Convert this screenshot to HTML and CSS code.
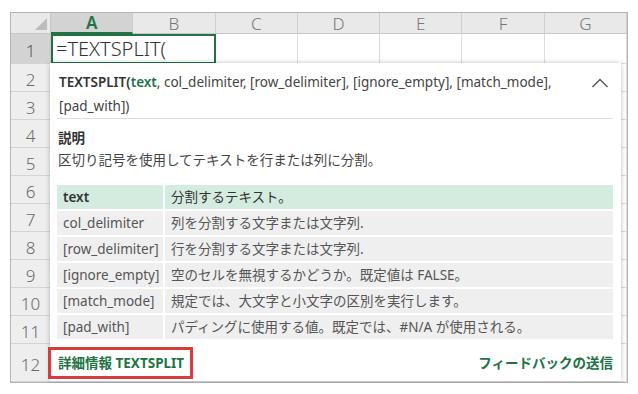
FILE: index.html
```html
<!DOCTYPE html>
<html lang="ja">
<head>
<meta charset="UTF-8" />
<meta name="viewport" content="width=device-width, initial-scale=1" />
<title>TEXTSPLIT</title>
<link rel="stylesheet" href="styles.css">
</head>
<body>
  <div class="sheet">
    <div class="grid" id="grid"></div>

    <div class="tip">
      <div class="sig">
        <div class="sig-text"><b>TEXTSPLIT(<span class="cur">text</span></b>, col_delimiter, [row_delimiter], [ignore_empty], [match_mode], [pad_with])</div>
        <svg class="chev" width="18" height="10" viewBox="0 0 18 10"><polyline points="1.5,9 9,1.5 16.5,9" fill="none" stroke="#555" stroke-width="1.4"/></svg>
      </div>

      <div class="desc-title">説明</div>
      <div class="desc">区切り記号を使用してテキストを行または列に分割。</div>

      <table class="args">
        <tr class="active"><td>text</td><td>分割するテキスト。</td></tr>
        <tr><td>col_delimiter</td><td>列を分割する文字または文字列.</td></tr>
        <tr><td>[row_delimiter]</td><td>行を分割する文字または文字列.</td></tr>
        <tr><td>[ignore_empty]</td><td>空のセルを無視するかどうか。既定値は FALSE。</td></tr>
        <tr><td>[match_mode]</td><td>規定では、大文字と小文字の区別を実行します。</td></tr>
        <tr><td>[pad_with]</td><td>パディングに使用する値。既定では、#N/A が使用される。</td></tr>
      </table>

      <div class="foot">
        <a class="more">詳細情報 TEXTSPLIT</a>
        <a class="feedback">フィードバックの送信</a>
      </div>
    </div>
  </div>

<script>
  const grid = document.getElementById('grid');
  const cols = ['A', 'B', 'C', 'D', 'E', 'F', 'G'];

  function cell(cls, text) {
    const d = document.createElement('div');
    d.className = cls;
    if (text) d.textContent = text;
    grid.appendChild(d);
    return d;
  }

  // kolomkoppen
  cell('corner');
  cols.forEach(c => cell(c === 'A' ? 'colhead sel' : 'colhead', c));

  // rijen 1 t/m 12
  for (let r = 1; r <= 12; r++) {
    cell(r === 1 ? 'rowhead sel' : 'rowhead', String(r));
    if (r === 1) {
      cell('cell edit', '=TEXTSPLIT(');
      cols.slice(2).forEach(() => cell('cell'));
    } else {
      cols.forEach(() => cell('cell'));
    }
  }
</script>
</body>
</html>
```

FILE: styles.css
```css
body {
  margin: 0;
  background: #fff;
  font-family: "Noto Sans", "Noto Sans CJK JP", sans-serif;
  color: #444;
}
.sheet {
  position: relative;
  margin: 12px 0 0 10px;
  width: 618px;
  height: 371px;
}
.grid {
  display: grid;
  grid-template-columns: 40px repeat(7, 1fr);
  grid-template-rows: 21px 30px repeat(10, 28px) 1fr;
  width: 100%;
  height: 100%;
  box-sizing: border-box;
  border: 1px solid #b4b4b4;
  overflow: hidden;
}
.corner {
  position: relative;
  background: #e9e9e9;
  border-right: 1px solid #c6c6c6;
  border-bottom: 1px solid #c6c6c6;
}
.corner::after {
  content: "";
  position: absolute;
  right: 3px;
  bottom: 3px;
  width: 12px;
  height: 12px;
  background: #bdbdbd;
  clip-path: polygon(100% 0, 100% 100%, 0 100%);
}
.colhead {
  background: #e9e9e9;
  border-right: 1px solid #cfcfcf;
  border-bottom: 1px solid #c6c6c6;
  color: #777;
  font-size: 17px;
  font-weight: 300;
  display: flex;
  justify-content: center;
  align-items: center;
}
.colhead.sel {
  background: #d3d3d3;
  color: #217346;
  font-weight: 600;
  border-bottom: 2px solid #217346;
}
.rowhead {
  background: #eeeeee;
  border-right: 1px solid #c6c6c6;
  border-bottom: 1px solid #d4d4d4;
  color: #6a6a6a;
  font-size: 17px;
  font-weight: 300;
  display: flex;
  justify-content: center;
  align-items: center;
  padding-top: 3px;
}
.rowhead.sel {
  background: #d3d3d3;
  color: #555;
}
.cell {
  border-right: 1px solid #dcdcdc;
  border-bottom: 1px solid #dcdcdc;
}
.cell.edit {
  grid-column: span 2;
  border: 2px solid #217346;
  box-sizing: border-box;
  font-size: 20px;
  font-weight: 300;
  color: #333;
  padding-left: 3px;
  line-height: 26px;
}

/* tooltip */
.tip {
  position: absolute;
  left: 40px;
  top: 51px;
  width: 571px;
  height: 318px;
  box-sizing: border-box;
  background: #fff;
  box-shadow: 0 0 5px rgba(0,0,0,0.25);
  padding: 7px 8px 0 7px;
  font-size: 13.5px;
}
.sig {
  display: flex;
  align-items: flex-start;
  border-bottom: 1px solid #dedede;
  padding-left: 2px;
}
.sig-text {
  flex: 1;
  line-height: 24px;
  color: #444;
}
.sig-text b {
  font-weight: 600;
  color: #333;
}
.sig-text .cur {
  color: #217346;
}
.chev {
  margin: 8px 4px 0 0;
}
.desc-title {
  margin-top: 8px;
  font-weight: 700;
  line-height: 22px;
  padding-left: 1px;
  color: #333;
}
.desc {
  line-height: 22px;
  padding-left: 1px;
}
.args {
  margin-top: 14px;
  width: 100%;
  border-collapse: separate;
  border-spacing: 0 2px;
  margin-bottom: -2px;
  position: relative;
  top: -2px;
}
.args td {
  background: #efefef;
  height: 24px;
  padding: 0 0 0 6px;
  line-height: 24px;
  color: #555;
}
.args td:first-child {
  width: 100px;
  border-right: 2px solid #fff;
}
.args tr.active td {
  background: #d4ebe0;
  color: #333;
}
.args tr.active td:first-child {
  font-weight: 600;
}
.foot {
  display: flex;
  justify-content: space-between;
  align-items: center;
  margin-top: 6px;
}
.more {
  margin-left: -9px;
  border: 3px solid #d63c3c;
  padding: 3px 6px 3px 7px;
  color: #217346;
  font-weight: 700;
  line-height: 20px;
}
.feedback {
  color: #217346;
  font-weight: 700;
  line-height: 20px;
}
```
